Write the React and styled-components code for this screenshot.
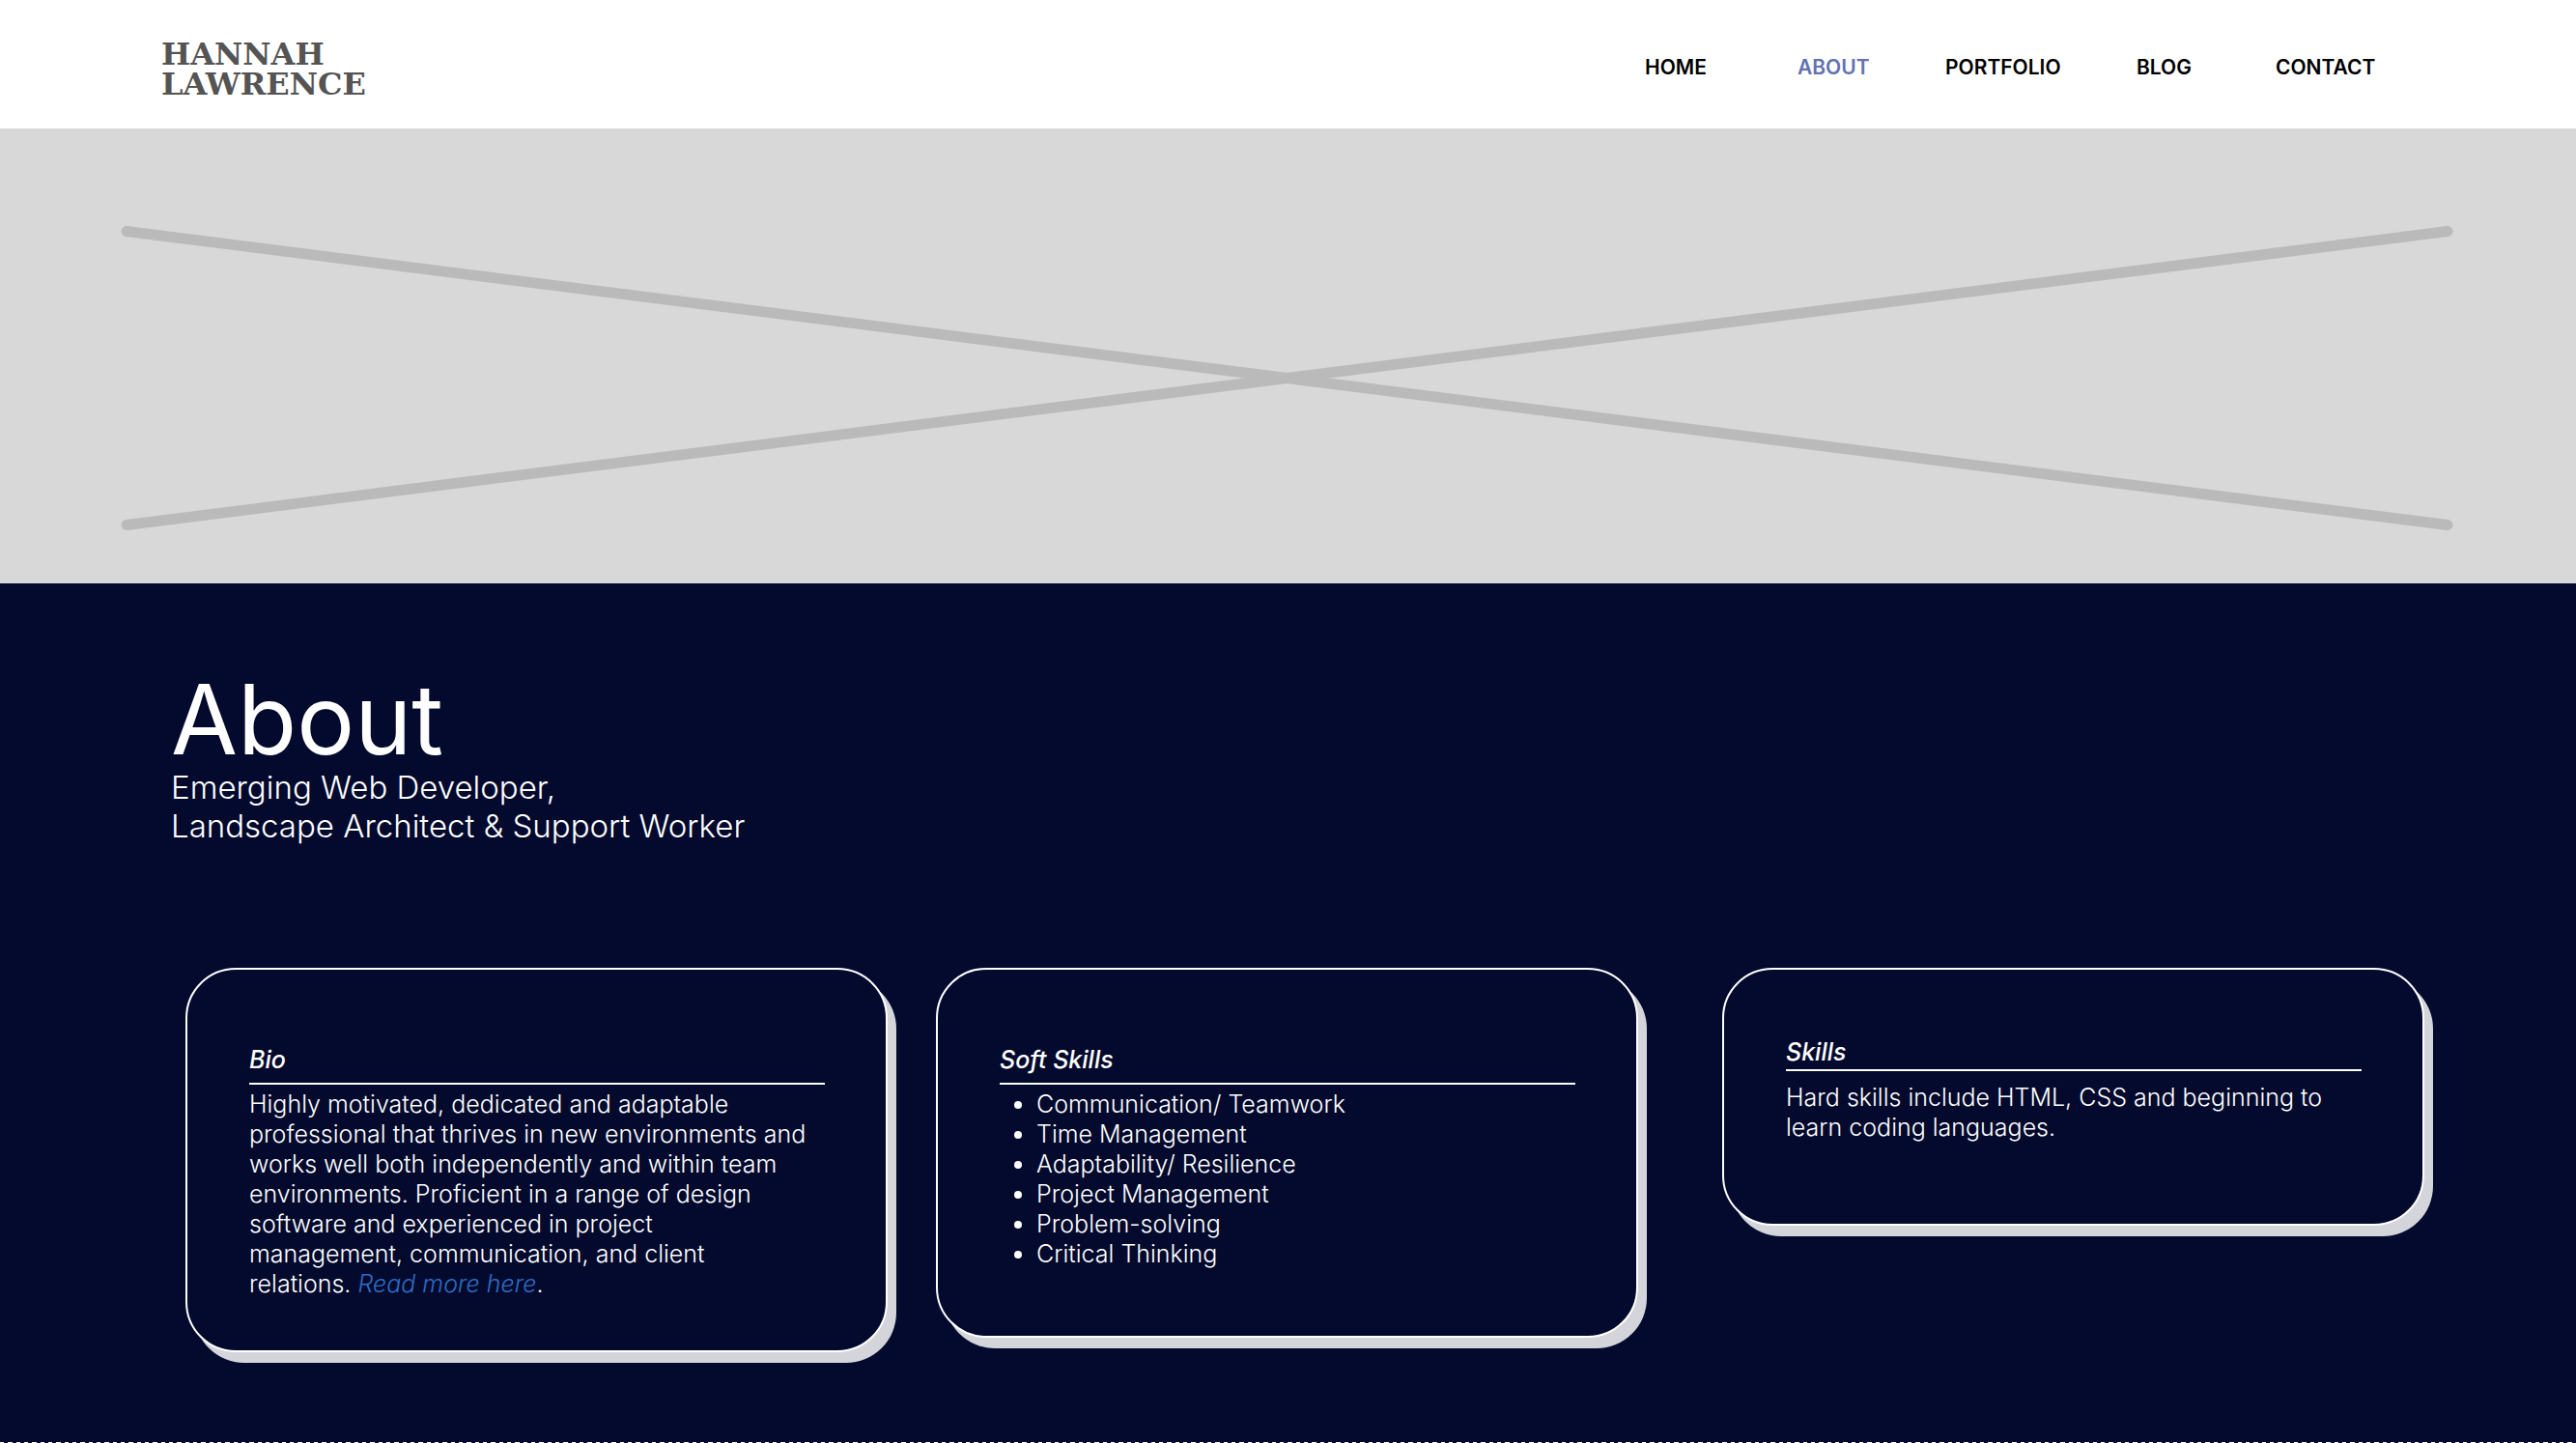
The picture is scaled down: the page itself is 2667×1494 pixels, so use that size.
import React from "react";
import styled, { createGlobalStyle } from "styled-components";

const navy = "#030a2d";

const GlobalStyle = createGlobalStyle`
  * { box-sizing: border-box; }
  body {
    margin: 0;
    background: ${navy};
    font-family: Inter, "Liberation Sans", sans-serif;
  }
  h1, h2, p, ul { margin: 0; padding: 0; }
`;

const Page = styled.div`
  min-height: 100vh;
  display: flex;
  flex-direction: column;
`;

const Header = styled.header`
  display: flex;
  justify-content: space-between;
  align-items: flex-start;
  padding: 41px 168px 30px 167px;
  background: #fff;
`;

const Logo = styled.a`
  color: #545454;
  font: 700 32px/31px "DejaVu Serif", serif;
  text-decoration: none;
`;

const Nav = styled.nav`
  display: grid;
  grid-template-columns: 158px 153px 198px 144px 143px;
  padding-top: 16px;
`;

const NavLink = styled.a`
  color: ${(p) => (p.$active ? "#6272b3" : "#000")};
  font-size: 21px;
  font-weight: 600;
  line-height: 26px;
  text-decoration: none;
`;

const Hero = styled.svg`
  display: block;
  width: 100%;
  height: auto;
  background: #d8d8d8;
`;

const Main = styled.main`
  flex: 1;
  padding: 91px 157px 82px 192px;
  background: ${navy};
  color: #fff;
`;

const Intro = styled.div`
  margin: 0 0 127px -15px;
`;

const Title = styled.h1`
  font-size: 100px;
  font-weight: 400;
  line-height: 100px;
`;

const Subtitle = styled.p`
  font-size: 33px;
  font-weight: 300;
  line-height: 40px;
`;

const Cards = styled.div`
  display: flex;
  align-items: flex-start;
  gap: 50px;
`;

const Card = styled.section`
  flex: 1;
  margin-left: ${(p) => (p.$apart ? 37 : 0)}px;
  padding: ${(p) => p.$top}px 63px ${(p) => p.$bottom}px 64px;
  border: 2px solid #fff;
  border-radius: 52px;
  background: ${navy};
  box-shadow: 9px 11px 0 #d4d5db;
`;

const CardTitle = styled.h2`
  margin-bottom: ${(p) => (p.$tight ? 12 : 5)}px;
  padding-bottom: ${(p) => (p.$tight ? 2 : 8)}px;
  border-bottom: 2px solid #fff;
  font-size: 25px;
  font-style: italic;
  font-weight: 500;
  line-height: 31px;
`;

const Text = styled.p`
  max-width: 580px;
  font-size: 25px;
  font-weight: 300;
  line-height: 31px;
`;

const More = styled.a`
  color: #2d6cc4;
  font-style: italic;
  text-decoration: none;
`;

const List = styled.ul`
  padding-left: 15px;
  list-style: none;
  font-size: 25px;
  font-weight: 300;
  line-height: 31px;
`;

const Item = styled.li`
  display: flex;
  align-items: center;
  gap: 15px;

  &::before {
    content: "";
    width: 8px;
    height: 8px;
    border-radius: 50%;
    background: #fff;
  }
`;

const Divider = styled.div`
  height: 1px;
  background: repeating-linear-gradient(
    90deg,
    #fff 0 4px, ${navy} 4px 8px,
    #fff 8px 13px, ${navy} 13px 17px,
    #fff 17px 21px, ${navy} 21px 25px
  );
`;

const links = ["Home", "About", "Portfolio", "Blog", "Contact"];

const softSkills = [
  "Communication/ Teamwork",
  "Time Management",
  "Adaptability/ Resilience",
  "Project Management",
  "Problem-solving",
  "Critical Thinking",
];

export default function App() {
  return (
    <Page>
      <GlobalStyle />
      <Header>
        <Logo href="#home">
          HANNAH
          <br />
          LAWRENCE
        </Logo>
        <Nav>
          {links.map((name) => (
            <NavLink
              key={name}
              href={`#${name.toLowerCase()}`}
              $active={name === "About"}
              aria-current={name === "About" ? "page" : undefined}
            >
              {name.toUpperCase()}
            </NavLink>
          ))}
        </Nav>
      </Header>
      <Hero viewBox="0 0 2667 471" aria-hidden="true">
        <path
          d="M131 106.5 2534 410.5M131 410.5 2534 106.5"
          stroke="#bababa"
          strokeWidth="11"
          strokeLinecap="round"
        />
      </Hero>
      <Main>
        <Intro>
          <Title>About</Title>
          <Subtitle>
            Emerging Web Developer,
            <br />
            Landscape Architect &amp; Support Worker
          </Subtitle>
        </Intro>
        <Cards>
          <Card $top={78} $bottom={53}>
            <CardTitle>Bio</CardTitle>
            <Text>
              Highly motivated, dedicated and adaptable professional that
              thrives in new environments and works well both independently and
              within team environments. Proficient in a range of design software
              and experienced in project management, communication, and client
              relations. <More href="#bio">Read more here</More>.
            </Text>
          </Card>
          <Card $top={78} $bottom={69}>
            <CardTitle>Soft Skills</CardTitle>
            <List>
              {softSkills.map((skill) => (
                <Item key={skill}>{skill}</Item>
              ))}
            </List>
          </Card>
          <Card $top={70} $bottom={84} $apart>
            <CardTitle $tight>Skills</CardTitle>
            <Text>
              Hard skills include HTML, CSS and beginning to learn coding
              languages.
            </Text>
          </Card>
        </Cards>
      </Main>
      <Divider />
    </Page>
  );
}
